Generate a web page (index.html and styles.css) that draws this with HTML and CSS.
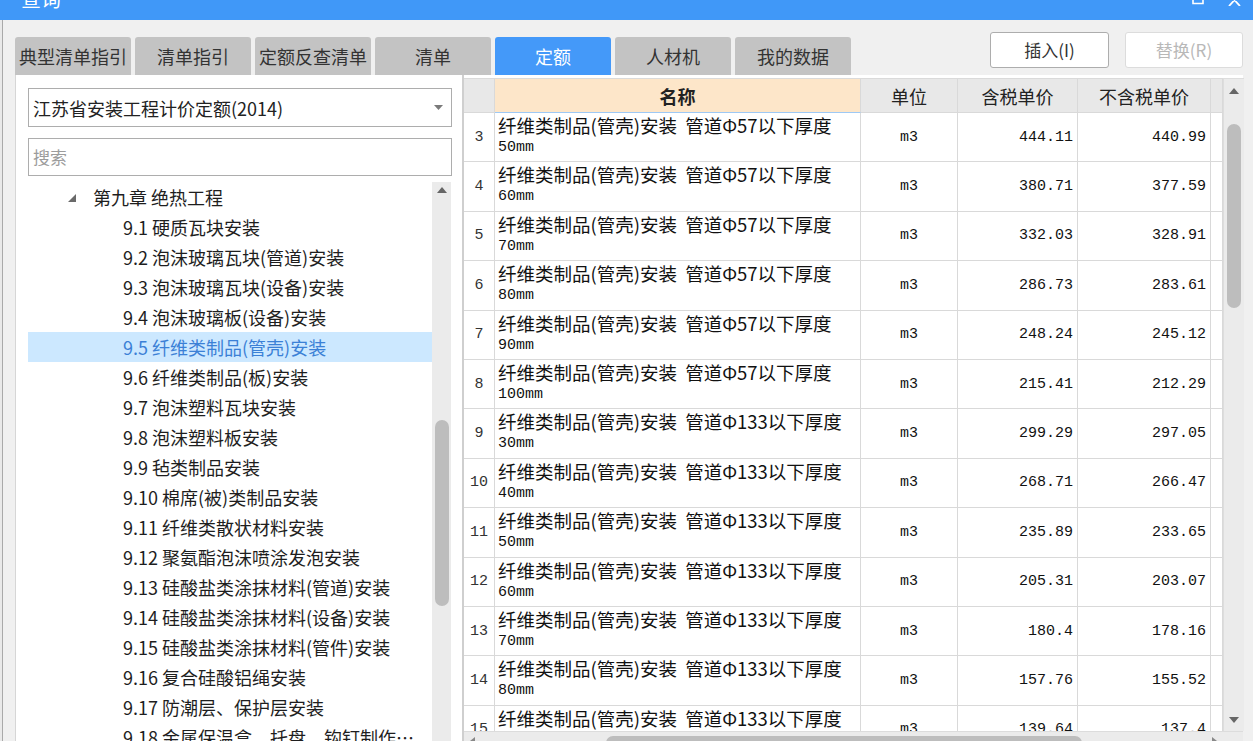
FILE: index.html
```html
<!DOCTYPE html>
<html lang="zh-CN">
<head>
<meta charset="utf-8">
<title>查询</title>
<link rel="stylesheet" href="styles.css">
</head>
<body>
<div class="titlebar">
  <span class="title">查询</span>
  <div class="ctrls">
    <svg class="ic-max" width="12" height="5" viewBox="0 0 12 5"><path d="M1 0 V3.5 H11 V0" fill="none" stroke="#fff" stroke-width="1.6"/></svg>
    <svg class="ic-close" width="13" height="6" viewBox="0 0 13 6"><path d="M0 -7 L12 6 M13 -7 L1 6" fill="none" stroke="#fff" stroke-width="1.8"/></svg>
  </div>
</div>
<div class="winbody">
  <div class="toprow">
    <div class="tabs">
      <div class="tab">典型清单指引</div>
      <div class="tab">清单指引</div>
      <div class="tab">定额反查清单</div>
      <div class="tab">清单</div>
      <div class="tab active">定额</div>
      <div class="tab">人材机</div>
      <div class="tab">我的数据</div>
    </div>
    <div class="btns">
      <div class="btn">插入(I)</div>
      <div class="btn disabled">替换(R)</div>
    </div>
  </div>
  <div class="panel">
    <div class="left">
      <div class="select">
        <span>江苏省安装工程计价定额(2014)</span>
        <svg class="dd" width="9" height="5" viewBox="0 0 9 5"><path d="M0 0 H9 L4.5 5 Z" fill="#7a7a7a"/></svg>
      </div>
      <div class="search">搜索</div>
      <div class="treewrap">
        <div class="tree">
          <div class="trow chapter"><svg class="tri" width="8" height="8" viewBox="0 0 8 8"><path d="M8 0 V8 H0 Z" fill="#6a6a6a"/></svg><span>第九章 绝热工程</span></div>
          <div class="trow item">9.1 硬质瓦块安装</div>
          <div class="trow item">9.2 泡沫玻璃瓦块(管道)安装</div>
          <div class="trow item">9.3 泡沫玻璃瓦块(设备)安装</div>
          <div class="trow item">9.4 泡沫玻璃板(设备)安装</div>
          <div class="trow item sel">9.5 纤维类制品(管壳)安装</div>
          <div class="trow item">9.6 纤维类制品(板)安装</div>
          <div class="trow item">9.7 泡沫塑料瓦块安装</div>
          <div class="trow item">9.8 泡沫塑料板安装</div>
          <div class="trow item">9.9 毡类制品安装</div>
          <div class="trow item">9.10 棉席(被)类制品安装</div>
          <div class="trow item">9.11 纤维类散状材料安装</div>
          <div class="trow item">9.12 聚氨酯泡沫喷涂发泡安装</div>
          <div class="trow item">9.13 硅酸盐类涂抹材料(管道)安装</div>
          <div class="trow item">9.14 硅酸盐类涂抹材料(设备)安装</div>
          <div class="trow item">9.15 硅酸盐类涂抹材料(管件)安装</div>
          <div class="trow item">9.16 复合硅酸铝绳安装</div>
          <div class="trow item">9.17 防潮层、保护层安装</div>
          <div class="trow item"><span class="ell">9.18 金属保温盒、托盘、钩钉制作安装</span></div>
        </div>
        <div class="vs vs-left">
          <svg class="arr" width="10" height="6" viewBox="0 0 10 6"><path d="M0 6 L5 0 L10 6 Z" fill="#666"/></svg>
          <div class="thumb thumb-left"></div>
        </div>
      </div>
    </div>
    <div class="gridwrap">
      <div class="gridtop">
        <div class="dgrid">
          <div class="c h"></div>
          <div class="c h hname">名称</div>
          <div class="c h">单位</div>
          <div class="c h">含税单价</div>
          <div class="c h">不含税单价</div>
          <div class="c h"></div>

          <div class="c rn">3</div>
          <div class="c nm"><span class="l1">纤维类制品(管壳)安装 管道Φ57以下厚度</span><span class="l2">50mm</span></div>
          <div class="c u">m3</div><div class="c p">444.11</div><div class="c p">440.99</div><div class="c f"></div>

          <div class="c rn">4</div>
          <div class="c nm"><span class="l1">纤维类制品(管壳)安装 管道Φ57以下厚度</span><span class="l2">60mm</span></div>
          <div class="c u">m3</div><div class="c p">380.71</div><div class="c p">377.59</div><div class="c f"></div>

          <div class="c rn">5</div>
          <div class="c nm"><span class="l1">纤维类制品(管壳)安装 管道Φ57以下厚度</span><span class="l2">70mm</span></div>
          <div class="c u">m3</div><div class="c p">332.03</div><div class="c p">328.91</div><div class="c f"></div>

          <div class="c rn">6</div>
          <div class="c nm"><span class="l1">纤维类制品(管壳)安装 管道Φ57以下厚度</span><span class="l2">80mm</span></div>
          <div class="c u">m3</div><div class="c p">286.73</div><div class="c p">283.61</div><div class="c f"></div>

          <div class="c rn">7</div>
          <div class="c nm"><span class="l1">纤维类制品(管壳)安装 管道Φ57以下厚度</span><span class="l2">90mm</span></div>
          <div class="c u">m3</div><div class="c p">248.24</div><div class="c p">245.12</div><div class="c f"></div>

          <div class="c rn">8</div>
          <div class="c nm"><span class="l1">纤维类制品(管壳)安装 管道Φ57以下厚度</span><span class="l2">100mm</span></div>
          <div class="c u">m3</div><div class="c p">215.41</div><div class="c p">212.29</div><div class="c f"></div>

          <div class="c rn">9</div>
          <div class="c nm"><span class="l1">纤维类制品(管壳)安装 管道Φ133以下厚度</span><span class="l2">30mm</span></div>
          <div class="c u">m3</div><div class="c p">299.29</div><div class="c p">297.05</div><div class="c f"></div>

          <div class="c rn">10</div>
          <div class="c nm"><span class="l1">纤维类制品(管壳)安装 管道Φ133以下厚度</span><span class="l2">40mm</span></div>
          <div class="c u">m3</div><div class="c p">268.71</div><div class="c p">266.47</div><div class="c f"></div>

          <div class="c rn">11</div>
          <div class="c nm"><span class="l1">纤维类制品(管壳)安装 管道Φ133以下厚度</span><span class="l2">50mm</span></div>
          <div class="c u">m3</div><div class="c p">235.89</div><div class="c p">233.65</div><div class="c f"></div>

          <div class="c rn">12</div>
          <div class="c nm"><span class="l1">纤维类制品(管壳)安装 管道Φ133以下厚度</span><span class="l2">60mm</span></div>
          <div class="c u">m3</div><div class="c p">205.31</div><div class="c p">203.07</div><div class="c f"></div>

          <div class="c rn">13</div>
          <div class="c nm"><span class="l1">纤维类制品(管壳)安装 管道Φ133以下厚度</span><span class="l2">70mm</span></div>
          <div class="c u">m3</div><div class="c p">180.4</div><div class="c p">178.16</div><div class="c f"></div>

          <div class="c rn">14</div>
          <div class="c nm"><span class="l1">纤维类制品(管壳)安装 管道Φ133以下厚度</span><span class="l2">80mm</span></div>
          <div class="c u">m3</div><div class="c p">157.76</div><div class="c p">155.52</div><div class="c f"></div>

          <div class="c rn">15</div>
          <div class="c nm"><span class="l1">纤维类制品(管壳)安装 管道Φ133以下厚度</span><span class="l2">90mm</span></div>
          <div class="c u">m3</div><div class="c p">139.64</div><div class="c p">137.4</div><div class="c f"></div>
        </div>
        <div class="vs vs-right">
          <svg class="arr" width="10" height="6" viewBox="0 0 10 6"><path d="M0 6 L5 0 L10 6 Z" fill="#666"/></svg>
          <div class="thumb thumb-right"></div>
          <svg class="arr arr-down" width="10" height="6" viewBox="0 0 10 6"><path d="M0 0 L5 6 L10 0 Z" fill="#666"/></svg>
        </div>
      </div>
      <div class="hs">
        <svg class="harr" width="5" height="8" viewBox="0 0 5 8"><path d="M5 0 L0 4 L5 8 Z" fill="#888"/></svg>
        <div class="hthumb"></div>
        <svg class="harr harr-r" width="5" height="8" viewBox="0 0 5 8"><path d="M0 0 L5 4 L0 8 Z" fill="#888"/></svg>
      </div>
    </div>
  </div>
</div>
</body>
</html>
```

FILE: styles.css
```css
* { box-sizing: border-box; }
html, body {
  margin: 0;
  height: 741px;
  overflow: hidden;
}
body {
  font-family: "Noto Sans CJK SC", "Microsoft YaHei", sans-serif;
  background: #e9e9e9;
  color: #222;
  width: 1253px;
}

/* title bar */
.titlebar {
  height: 20px;
  background: #4098f8;
  display: flex;
  overflow: hidden;
}
.title {
  color: #fff;
  font-size: 20px;
  line-height: 20px;
  margin-left: 21px;
  margin-top: -11px;
}
.ctrls {
  margin-left: auto;
  display: flex;
  align-items: flex-start;
  gap: 24px;
  margin-right: 12px;
}

/* window body */
.winbody {
  margin-left: 2px;
  border-left: 1px solid #a9a9a9;
  background: #f0f0f0;
  height: 721px;
  display: flex;
  flex-direction: column;
}
.toprow {
  height: 55px;
  flex: none;
  display: flex;
  padding: 0 10px 0 12px;
}
.tabs {
  display: flex;
  gap: 4px;
  align-self: flex-end;
}
.tab {
  width: 116px;
  height: 38px;
  background: #c3c3c3;
  border-radius: 3px 3px 0 0;
  font-size: 18px;
  line-height: 38px;
  text-align: center;
  color: #333;
}
.tab.active {
  background: #4499f9;
  color: #fff;
}
.btns {
  margin-left: auto;
  margin-top: 12px;
  display: flex;
  gap: 16px;
  align-self: flex-start;
}
.btn {
  width: 119px;
  height: 36px;
  background: #fff;
  border: 1px solid #adadad;
  border-radius: 3px;
  font-size: 17px;
  line-height: 33px;
  text-align: center;
  color: #333;
}
.btn.disabled {
  width: 118px;
  border-color: #dcdcdc;
  color: #b8b8b8;
}

/* main panel */
.panel {
  flex: 1;
  display: flex;
  margin: 0 10px 0 12px;
  background: #fff;
  border-left: 1px solid #d6d6d6;
  min-height: 0;
}
.left {
  width: 446px;
  flex: none;
  padding: 13px 10px 0 12px;
  display: flex;
  flex-direction: column;
}
.select {
  height: 39px;
  border: 1px solid #adadad;
  display: flex;
  align-items: center;
  padding: 0 0 0 4px;
  font-size: 18px;
  color: #222;
}
.select .dd {
  margin-left: auto;
  margin-right: 8px;
}
.search {
  height: 38px;
  margin-top: 11px;
  border: 1px solid #adadad;
  padding-left: 4px;
  font-size: 17px;
  line-height: 36px;
  color: #9c9c9c;
}
.treewrap {
  margin-top: 6px;
  flex: 1;
  display: flex;
  min-height: 0;
}
.tree {
  width: 404px;
  flex: none;
  overflow: hidden;
}
.trow {
  height: 30px;
  line-height: 30px;
  font-size: 18px;
  white-space: nowrap;
  color: #1e1e1e;
}
.trow.chapter {
  padding-left: 40px;
  display: flex;
  align-items: center;
}
.trow.chapter .tri {
  margin-right: 17px;
  margin-top: 1px;
}
.trow.item {
  padding-left: 95px;
}
.trow.sel {
  background: #cce8ff;
  color: #3b80d6;
}
.ell {
  display: inline-block;
  max-width: 300px;
  overflow: hidden;
  text-overflow: ellipsis;
  vertical-align: top;
}

/* scrollbars */
.vs {
  background: #ebebeb;
  display: flex;
  flex-direction: column;
  align-items: center;
  flex: none;
}
.vs-left {
  width: 19px;
}
.vs-left .arr { margin-top: 5px; }
.thumb {
  background: #bdbdbd;
  border-radius: 7px;
  width: 14px;
}
.thumb-left {
  margin-top: 227px;
  height: 186px;
}
.vs-right {
  width: 21px;
  border-left: 1px solid #dddddd;
  border-top: 1px solid #dddddd;
}
.vs-right .arr { margin-top: 9px; }
.thumb-right {
  margin-top: 30px;
  height: 184px;
}
.vs-right .arr-down {
  margin-top: auto;
  margin-bottom: 8px;
}

/* grid */
.gridwrap {
  flex: 1;
  border-left: 2px solid #cfcfcf;
  padding-top: 3px;
  display: flex;
  flex-direction: column;
  min-width: 0;
}
.gridtop {
  height: 653px;
  flex: none;
  display: flex;
}
.dgrid {
  width: 759px;
  flex: none;
  overflow: hidden;
  display: grid;
  grid-template-columns: 31px 366px 97px 120px 133px 12px;
  grid-template-rows: 34px;
  grid-auto-rows: 49.4px;
  border-top: 1px solid #dadada;
}
.c {
  border-right: 1px solid #d9d9d9;
  border-bottom: 1px solid #d9d9d9;
  overflow: hidden;
}
.h {
  background: #e8e8e8;
  font-size: 18px;
  display: flex;
  align-items: center;
  justify-content: center;
  color: #222;
}
.h.hname {
  background: #fde6c9;
  font-weight: bold;
  border-bottom: 1px solid #9ec9f5;
}
.rn {
  font-family: "Liberation Mono", monospace;
  font-size: 15px;
  display: flex;
  align-items: center;
  justify-content: center;
  color: #333;
}
.nm {
  padding: 1px 0 0 3px;
  color: #111;
}
.nm .l1 {
  display: block;
  font-size: 18.5px;
  line-height: 22px;
  white-space: nowrap;
  word-spacing: 4px;
}
.nm .l2 {
  display: block;
  margin-top: 4px;
  font-family: "Liberation Mono", monospace;
  font-size: 15px;
  line-height: 16px;
}
.u {
  font-family: "Liberation Mono", monospace;
  font-size: 15px;
  display: flex;
  align-items: center;
  justify-content: center;
  color: #111;
}
.p {
  font-family: "Liberation Mono", monospace;
  font-size: 15px;
  display: flex;
  align-items: center;
  justify-content: flex-end;
  padding-right: 4px;
  color: #111;
}

/* horizontal scrollbar */
.hs {
  height: 20px;
  flex: none;
  background: #ebebeb;
  border-top: 1px solid #dcdcdc;
  display: flex;
  align-items: flex-start;
  padding-left: 6px;
  padding-right: 26px;
}
.harr { margin-top: 5px; }
.hthumb {
  margin-left: 131px;
  margin-top: 4px;
  width: 476px;
  height: 14px;
  background: #bdbdbd;
  border-radius: 7px;
}
.harr-r { margin-left: auto; }
```
